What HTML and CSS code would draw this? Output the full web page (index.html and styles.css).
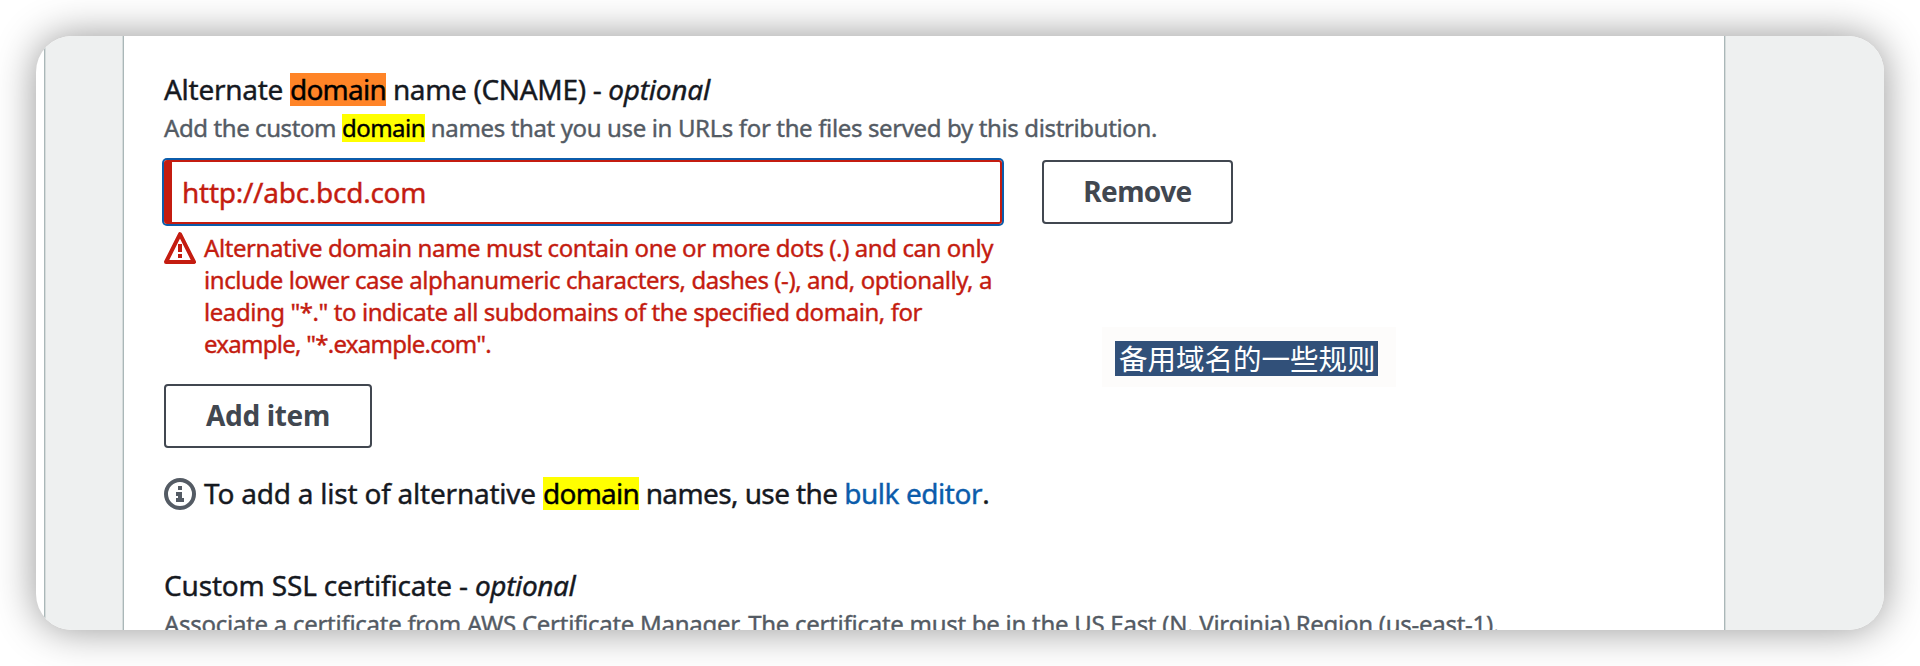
FILE: index.html
```html
<!DOCTYPE html>
<html lang="en">
<head>
<meta charset="utf-8">
<title>Alternate domain name</title>
<link rel="stylesheet" href="styles.css">
</head>
<body>
<main class="window">
  <div class="gutter gutter-left"></div>
  <section class="panel">
    <h2 class="label"><span class="t-alt">Alternate </span><mark class="hit hit-current">domain</mark><span class="t-cname"> name (CNAME) - </span><em>optional</em></h2>
    <p class="hint"><span class="t-add">Add the custom </span><mark class="hit hit-small">domain</mark><span class="t-names"> names that you use in URLs for the files served by this distribution.</span></p>
    <div class="row">
      <div class="input">http://abc.bcd.com</div>
      <button class="button button-remove">Remove</button>
    </div>
    <div class="error">
      <svg class="icon" viewBox="0 0 16 16" fill="none" stroke="currentColor" stroke-width="2" stroke-linejoin="round"><path d="M8 1.1 15 15H1z"/><path d="M8 6v4M8 11v2"/></svg>
      <p class="error-text"><span class="e1">Alternative domain name must contain one or more dots (.) and can only</span><span class="e2">include lower case alphanumeric characters, dashes (-), and, optionally, a</span><span class="e3">leading "*." to indicate all subdomains of the specified domain, for</span><span class="e4">example, "*.example.com".</span></p>
    </div>
    <button class="button button-add">Add item</button>
    <div class="info">
      <svg class="icon icon-info" viewBox="0 0 16 16" fill="none" stroke="currentColor" stroke-width="2"><circle cx="8" cy="8" r="7"/><path d="M8 4v2M6 8h3M8 7.5V11M6 11h4"/></svg>
      <p class="info-text"><span class="t-to">To add a list of alternative </span><mark class="hit">domain</mark><span class="t-use"> names, use the </span><a class="link">bulk editor</a>.</p>
    </div>
    <h2 class="label label-ssl"><span class="t-ssl">Custom SSL certificate - </span><em class="em-ssl">optional</em></h2>
    <p class="hint t-assoc">Associate a certificate from AWS Certificate Manager. The certificate must be in the US East (N. Virginia) Region (us-east-1).</p>
  </section>
  <div class="gutter gutter-right"></div>
  <div class="note"><span class="note-text">备用域名的一些规则</span></div>
</main>
</body>
</html>
```
FILE: styles.css
```css
* { box-sizing: border-box; }

body {
  margin: 0;
  height: 666px;
  padding: 36px;
  background: #fff;
  color: #16191f;
  font-family: "Noto Sans", "Noto Sans CJK SC", sans-serif;
  overflow: hidden;
}

.window {
  position: relative;
  display: flex;
  width: 1848px;
  height: 594px;
  padding-left: 8px;
  border-radius: 36px;
  background: #fff;
  box-shadow: 0 0 40px rgba(0, 0, 0, .42);
  overflow: hidden;
}

.gutter { background: #eef0f0; }
.gutter-left {
  width: 80px;
  border-left: 1px solid #aab7b8;
  border-right: 1px solid #aab7b8;
  box-shadow: inset 1px 0 #d5dbdb, inset -1px 0 #d5dbdb;
}
.gutter-right {
  flex: 1;
  border-left: 1px solid #aab7b8;
  box-shadow: inset 1px 0 #d5dbdb;
}

.panel {
  width: 1600px;
  padding: 33px 40px 0;
  -webkit-text-stroke: .4px currentColor;
}

.label {
  margin: 0;
  font-size: 28px;
  font-weight: 400;
  line-height: 41px;
  height: 41px;
  white-space: pre;
}
.label em { letter-spacing: -.25px; }
.label .em-ssl { letter-spacing: -.4px; }
.label-ssl { margin-top: 52px; }

.hint {
  margin: 0;
  height: 36px;
  color: #545b64;
  font-size: 24px;
  line-height: 36px;
  white-space: pre;
}

.hit {
  display: inline-block;
  height: 33px;
  background: #ff0;
  color: #000;
  line-height: 33px;
  letter-spacing: -.77px;
}
.hit-current { background: #ff8427; }
.hit-small { height: 28px; line-height: 28px; letter-spacing: -.53px; }

.t-alt { letter-spacing: -.28px; }
.t-cname { letter-spacing: -.34px; }
.t-add { letter-spacing: -.41px; }
.t-names { letter-spacing: -.364px; }
.t-to { letter-spacing: -.22px; }
.t-use { letter-spacing: -.6px; }
.t-ssl { letter-spacing: -.17px; }
.t-assoc { letter-spacing: -.27px; }

.row {
  display: flex;
  align-items: center;
  gap: 38px;
  margin-top: 12px;
  height: 68px;
}

.input {
  width: 838px;
  height: 64px;
  padding-left: 10px;
  border: 2px solid #c41c10;
  border-left-width: 8px;
  border-radius: 3px;
  color: #c41c10;
  font-size: 28px;
  line-height: 60px;
  letter-spacing: -.26px;
  box-shadow: 0 0 0 2px #0b5cab;
}

.button {
  display: block;
  height: 64px;
  padding: 0 0 2px;
  border: 2px solid #414750;
  border-radius: 4px;
  background: #fff;
  color: #414750;
  font: 700 28px "Noto Sans", sans-serif;
  -webkit-text-stroke: 0;
}
.row .button-remove { margin-left: 2px; }
.button-remove { width: 191px; letter-spacing: -.6px; }
.button-add { width: 208px; margin-top: 24px; letter-spacing: -.35px; }

.icon { flex: none; width: 32px; height: 32px; }

.error {
  display: flex;
  gap: 8px;
  margin-top: 6px;
  color: #c41c10;
}
.error-text {
  display: flex;
  flex-direction: column;
  margin: 0;
  font-size: 24px;
  line-height: 32px;
}
.e1 { letter-spacing: -.407px; }
.e2 { letter-spacing: -.419px; }
.e3 { letter-spacing: -.437px; }
.e4 { letter-spacing: -.73px; }

.info {
  display: flex;
  gap: 8px;
  height: 40px;
  margin-top: 25px;
}
.icon-info { margin-top: 5px; color: #545b64; }
.info-text { margin: 0; font-size: 28px; line-height: 40px; white-space: pre; }
.link { color: #0b5cab; letter-spacing: -.44px; }

/* Annotation laid over the panel */
.note {
  position: absolute;
  left: 1066px;
  top: 291px;
  width: 294px;
  height: 60px;
  padding: 14px 0 0 13px;
  background: #fdfcfb;
}
.note-text {
  display: block;
  width: 263px;
  height: 35px;
  padding-left: 4px;
  background: #315079;
  color: #fff;
  font: 28.5px/34px "Noto Sans CJK SC", sans-serif;
  white-space: nowrap;
}
```
